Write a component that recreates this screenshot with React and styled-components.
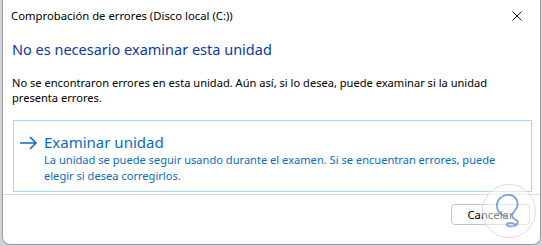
import styled, { createGlobalStyle } from "styled-components";

const GlobalStyle = createGlobalStyle`
  html, body {
    margin: 0;
    padding: 0;
    background: #cfd3d8;
  }
  body {
    font-family: "Noto Sans", "Open Sans", "DejaVu Sans", sans-serif;
    width: 542px;
    height: 246px;
    overflow: hidden;
  }
`;

const Dialog = styled.div`
  position: relative;
  box-sizing: border-box;
  margin-left: 2px;
  width: 539px;
  height: 245px;
  background: #ffffff;
  border: 1px solid #9c9c9c;
  border-top: none;
  border-radius: 0 0 8px 8px;
  display: flex;
  flex-direction: column;
`;

const TitleBar = styled.div`
  height: 31px;
  display: flex;
  align-items: center;
  justify-content: space-between;
  padding-left: 8px;
`;

const Title = styled.span`
  font-size: 11.3px;
  color: #000;
`;

const CloseButton = styled.button`
  width: 46px;
  height: 31px;
  border: none;
  background: transparent;
  display: flex;
  align-items: center;
  justify-content: center;
  padding: 0;
`;

const Body = styled.div`
  flex: 1;
  padding: 8px 10px 0 9px;
`;

const Heading = styled.h1`
  margin: 0;
  font-size: 14.5px;
  font-weight: 400;
  color: #0b3aa3;
  line-height: 20px;
`;

const Text = styled.p`
  margin: 16px 0 0;
  font-size: 11.1px;
  line-height: 15px;
  color: #000;
`;

const CommandLink = styled.button`
  box-sizing: border-box;
  margin: 15px 0 0 1px;
  width: 519px;
  height: 72px;
  border: 1px solid #a9d6ec;
  background: #fff;
  display: flex;
  align-items: flex-start;
  gap: 6px;
  padding: 11px 0 0 5px;
  text-align: left;
  font-family: inherit;
  cursor: pointer;
`;

const LinkText = styled.div`
  display: flex;
  flex-direction: column;
`;

const LinkTitle = styled.span`
  font-size: 15px;
  line-height: 20px;
  color: #0a6bc2;
`;

const LinkNote = styled.span`
  font-size: 11.1px;
  line-height: 16px;
  color: #0a6bc2;
`;

const Footer = styled.div`
  height: 40px;
  border-top: 1px solid #dcdcdc;
  display: flex;
  justify-content: flex-end;
  align-items: flex-start;
  padding: 9px 10px 0 0;
`;

const Button = styled.button`
  box-sizing: border-box;
  width: 79px;
  height: 21px;
  border: 1px solid #c4c4c4;
  border-radius: 4px;
  background: #fdfdfd;
  font-family: inherit;
  font-size: 11.3px;
  color: #000;
  padding: 0;
`;

const Watermark = styled.div`
  position: absolute;
  right: 4px;
  bottom: 6px;
  width: 52px;
  height: 52px;
  border-radius: 50%;
  background: rgba(255, 255, 255, 0.5);
  border: 1.5px solid rgba(205, 210, 220, 0.75);
  pointer-events: none;
`;

const Arrow = () => (
  <svg width="19" height="14" viewBox="0 0 19 14" style={{ marginTop: 4 }}>
    <path d="M1 7h16M11 1l6 6-6 6" fill="none" stroke="#0a6bc2" strokeWidth="1.6" />
  </svg>
);

export default function App() {
  return (
    <>
      <GlobalStyle />
      <Dialog>
        <TitleBar>
          <Title>Comprobación de errores (Disco local (C:))</Title>
          <CloseButton aria-label="Cerrar">
            <svg width="10" height="10" viewBox="0 0 10 10">
              <path d="M0.5 0.5l9 9M9.5 0.5l-9 9" stroke="#1a1a1a" strokeWidth="1" />
            </svg>
          </CloseButton>
        </TitleBar>
        <Body>
          <Heading>No es necesario examinar esta unidad</Heading>
          <Text>
            No se encontraron errores en esta unidad. Aún así, si lo desea, puede examinar si la unidad
            <br />
            presenta errores.
          </Text>
          <CommandLink>
            <Arrow />
            <LinkText>
              <LinkTitle>Examinar unidad</LinkTitle>
              <LinkNote>
                La unidad se puede seguir usando durante el examen. Si se encuentran errores, puede
                <br />
                elegir si desea corregirlos.
              </LinkNote>
            </LinkText>
          </CommandLink>
        </Body>
        <Footer>
          <Button>Cancelar</Button>
        </Footer>
        <Watermark>
          <svg width="52" height="52" viewBox="0 0 52 52">
            <path
              d="M23 31c-6-1-10-6-9-12 1-6 7-10 13-9 6 1 9 7 7 12-1 3-4 5-5 8 0 2 2 4 4 5 3 1 2 5-2 6-4 1-8 0-7-2 1-2 5-1 8 0"
              fill="none"
              stroke="#5b8fcf"
              strokeWidth="1.8"
              strokeLinecap="round"
              opacity="0.8"
            />
          </svg>
        </Watermark>
      </Dialog>
    </>
  );
}
